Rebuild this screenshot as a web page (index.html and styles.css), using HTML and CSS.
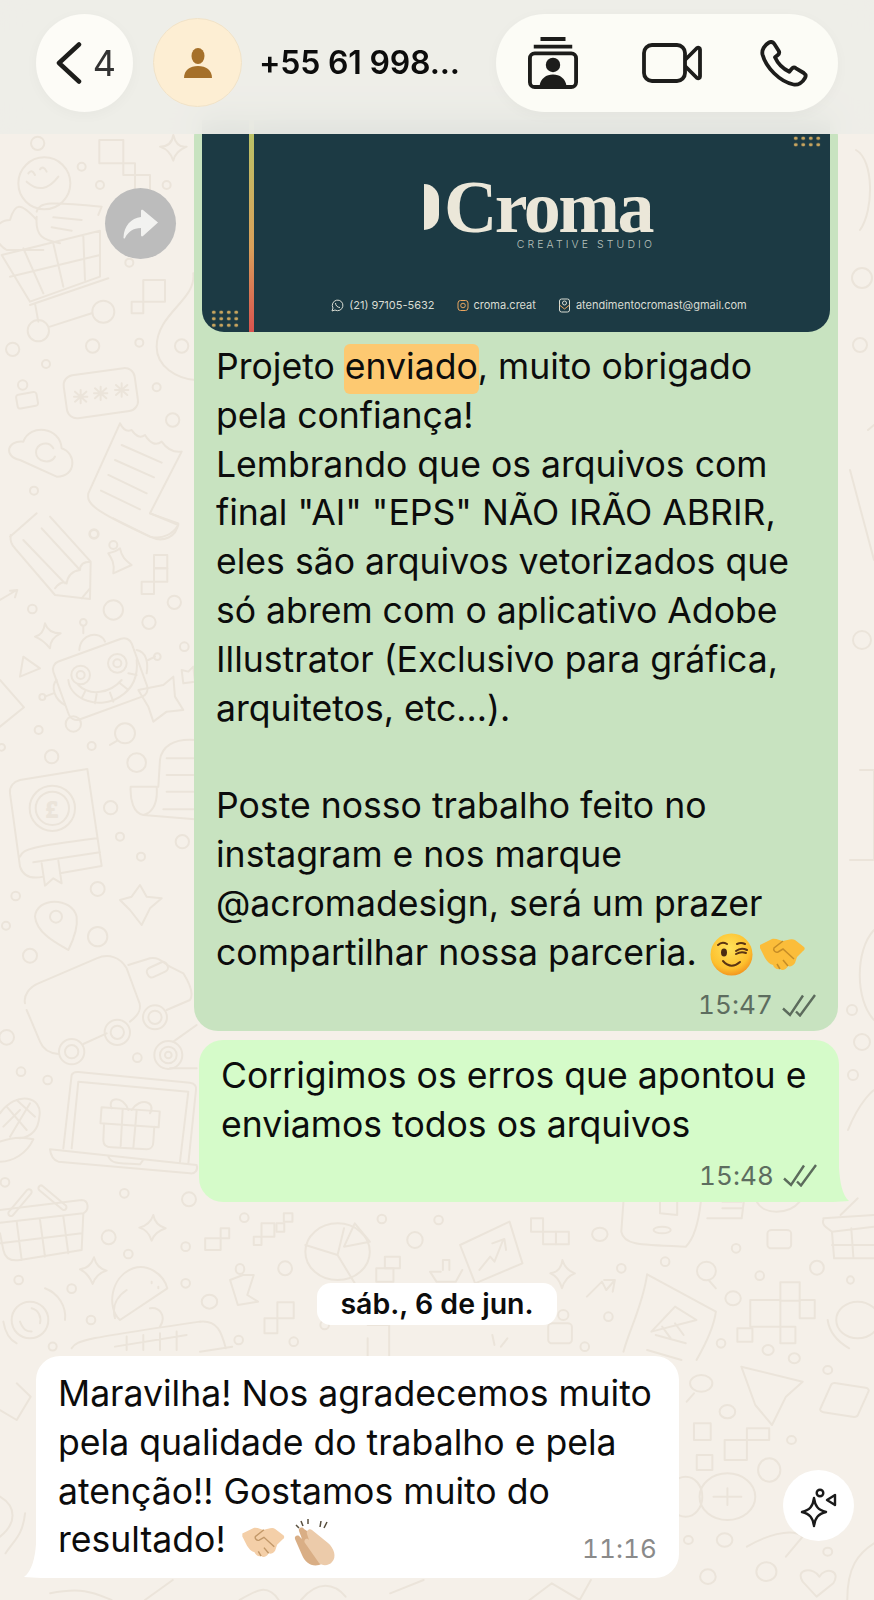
FILE: index.html
```html
<!DOCTYPE html>
<html lang="pt-BR">
<head>
    <meta charset="UTF-8">
    <title>Conversa</title>
    <link rel="stylesheet" href="styles.css">
</head>
<body>
<div class="screen">
    <!-- wallpaper doodles: coordinates are the ones read off the reference crops -->
    <svg class="doodles" width="874" height="1600" viewBox="0 0 874 1600" aria-hidden="true">
        <g transform="translate(0,140) scale(.3333)">
            <circle cx="133" cy="130" r="78"/><path d="M80 125Q130 170 175 110M85 100Q95 85 105 105M120 88Q130 75 140 95"/>
            <path d="M110 240C60 185 45 190 30 240C-20 240-30 300 20 330L130 330M110 215C120 185 150 185 305 200L295 225M110 230C105 290 130 300 180 310M160 232L245 240M155 262L215 272"/>
            <path d="M5 345L300 272L300 410L90 485ZM70 325L130 460M160 310L190 440M250 290L255 420M30 410L300 345M90 495L325 415M105 490L115 545M150 560L275 520"/>
            <circle cx="310" cy="515" r="33"/><circle cx="115" cy="572" r="32"/>
            <rect x="298" y="0" width="72" height="70"/><rect x="370" y="70" width="35" height="35"/><rect x="405" y="105" width="45" height="45"/>
            <rect x="430" y="420" width="65" height="65"/><rect x="395" y="485" width="35" height="35"/>
            <path d="M480 20Q515 20 520-15Q530 25 560 20Q525 35 520 62Q510 30 480 20ZM580 400C590 480 470 520 470 620C470 680 530 715 585 720"/>
            <rect x="50" y="760" width="62" height="42" rx="8" transform="rotate(-10 80 780)"/><circle cx="68" cy="735" r="14"/>
            <rect x="195" y="695" width="215" height="130" rx="30" transform="rotate(-8 300 760)"/>
            <path d="M242 750V790M222 770H262M225 755L259 785M259 755L225 785M302 740V780M282 760H322M285 745L319 775M319 745L285 775M365 730V770M345 750H385M348 735L382 765M382 735L348 765"/>
            <path d="M60 960C10 950 20 900 70 905C90 850 180 860 185 925C230 940 230 1010 170 1010ZM160 925C145 900 110 910 108 937C108 965 150 975 165 950"/>
            <path d="M360 850L265 1060C260 1090 275 1110 450 1190C490 1200 520 1180 535 1155L450 1120L545 935M360 850Q375 880 395 870Q415 900 435 885Q460 925 485 905Q510 940 545 935M365 915L485 968M345 960L462 1012M325 1005L440 1060M303 1052L420 1108"/>
            <circle cx="245" cy="80" r="12"/><circle cx="300" cy="135" r="12"/><circle cx="500" cy="135" r="12"/><circle cx="388" cy="368" r="12"/><circle cx="545" cy="618" r="20"/><circle cx="418" cy="608" r="12"/><circle cx="278" cy="618" r="20"/><circle cx="38" cy="628" r="20"/><circle cx="138" cy="672" r="12"/><circle cx="470" cy="742" r="12"/><circle cx="518" cy="840" r="20"/><circle cx="102" cy="1052" r="12"/><circle cx="282" cy="1182" r="12"/><circle cx="113" cy="10" r="20"/>
        </g>
        <g transform="translate(0,520) scale(.3333)">
            <path d="M32 45C30 60 35 75 45 85L165 225L270 237L272 125L150-10M30 50L110-20M70 60L195 190M125 25L240 150M165 205Q185 180 200 190Q205 155 240 150Q240 125 272 125M245 235L270 205"/>
            <path d="M340-5L450 50C490 70 530 50 535 10L450-20"/>
            <path d="M325 100C345 95 345 95 360 85C365 110 375 120 395 135L340 160C345 130 335 115 325 100Z"/><circle cx="340" cy="75" r="12"/>
            <rect x="462" y="105" width="40" height="40"/><rect x="462" y="145" width="40" height="40"/><rect x="425" y="185" width="37" height="37"/>
            <path d="M0 240L25 225L50 210M30 212L52 210L45 232M105 350Q130 345 135 310Q145 340 182 340Q150 355 150 385Q130 360 105 350ZM60 470L70 410L120 445ZM0 480L72 562L0 620"/>
            <rect x="175" y="385" width="250" height="185" rx="25" transform="rotate(-20 300 475)"/>
            <circle cx="242" cy="465" r="28"/><circle cx="242" cy="465" r="12"/><circle cx="352" cy="430" r="28"/><circle cx="352" cy="430" r="12"/>
            <path d="M205 480C210 540 300 570 360 530C400 505 415 470 410 420M235 495C270 530 330 520 365 480M255 515L245 535M290 522L285 550M330 518L340 545M360 490L385 510M385 460L410 465"/>
            <path d="M238 390C240 340 300 330 315 365M250 340V320M410 390C440 395 445 430 440 460M445 420L465 410M170 480C150 500 165 540 195 555M135 530L160 520"/>
            <path d="M415 510L490 495L520 470L525 530L550 570L500 575L460 605L445 560ZM545 450L565 455L580 440L585 485L550 490Z"/>
            <circle cx="375" cy="640" r="30"/><path d="M352 662L330 675"/>
            <path d="M392 800H470C475 860 450 880 430 885C400 880 390 840 392 800M475 800L480 720C485 680 520 655 585 660M430 885L585 898M500 715H580M500 765H580M500 815H580M490 868H580"/>
            <path d="M30 820C28 800 40 785 60 780L262 747L305 1038L180 1060M30 820L60 1040C70 1070 95 1078 130 1070M60 1010C70 985 100 980 290 955M100 1027L300 997M125 1030L135 1097L160 1075L185 1090L175 1022"/>
            <circle cx="157" cy="865" r="68"/><circle cx="157" cy="865" r="50"/><text x="137" y="890" class="pound">£</text>
            <circle cx="282" cy="42" r="14"/><circle cx="97" cy="267" r="13"/><circle cx="340" cy="270" r="29"/><circle cx="447" cy="307" r="20"/><circle cx="523" cy="247" r="20"/><circle cx="553" cy="380" r="13"/><circle cx="116" cy="630" r="12"/><circle cx="275" cy="678" r="12"/><circle cx="155" cy="710" r="20"/><circle cx="410" cy="728" r="28"/><circle cx="332" cy="863" r="20"/><circle cx="360" cy="950" r="12"/><circle cx="547" cy="965" r="20"/><circle cx="423" cy="1010" r="12"/><circle cx="293" cy="1107" r="21"/><circle cx="47" cy="1128" r="13"/><circle cx="220" cy="612" r="23"/><circle cx="250" cy="307" r="10"/><circle cx="472" cy="410" r="10"/><circle cx="127" cy="531" r="9"/><circle cx="5" cy="682" r="10"/>
        </g>
        <g transform="translate(0,900) scale(.3333)">
            <path d="M360 0L395-10L420-45L440-10L485-5L450 25L425 75L390 30ZM105 50C110-10 215-10 230 50C235 90 215 130 205 150C170 130 110 100 105 50Z"/><circle cx="168" cy="50" r="18"/>
            <path d="M75 310C70 285 90 260 115 250L290 175C325 160 360 170 380 205L415 300C430 330 410 350 390 365M80 330L120 425C130 450 150 460 175 462M250 432L320 400M385 195L450 175C480 170 490 190 510 200L550 220C575 260 580 285 570 300L500 330"/>
            <rect x="440" y="195" width="65" height="30" rx="12" transform="rotate(-25 470 210)"/>
            <circle cx="215" cy="455" r="38"/><circle cx="215" cy="455" r="20"/><circle cx="352" cy="397" r="38"/><circle cx="352" cy="397" r="20"/><circle cx="465" cy="352" r="36"/><circle cx="465" cy="352" r="20"/>
            <circle cx="505" cy="465" r="42"/><circle cx="505" cy="465" r="25"/><circle cx="505" cy="465" r="10"/><path d="M520 425L590 375M510 505H590"/>
            <path d="M190 745L215 525C218 518 225 515 235 516L570 548C585 550 590 560 588 570L565 790M215 745L235 545L565 575L540 785M150 748L590 795C595 810 585 822 570 820L175 785C160 780 152 765 150 748ZM325 770C335 790 345 790 420 793L428 782"/>
            <rect x="303" y="628" width="175" height="48" transform="rotate(4 390 650)"/>
            <path d="M312 675L310 720C310 735 320 742 335 742L440 748C455 748 460 735 460 725L463 680M368 630L362 738M410 632L400 745M335 625C320 590 370 585 385 630M395 630C420 590 470 605 450 640"/>
            <path d="M0 640C50 570 130 590 118 650C115 690 95 710 60 715M20 620L80 690M50 600L105 650M10 680L60 630M30 710L90 610M0 725C40 710 70 710 100 718C80 760 40 785 0 785"/>
            <path d="M0 930L245 900C265 900 270 930 250 940L0 968M250 940L245 1050L60 1080C30 1085 15 1075 10 1050L0 1000M50 965L65 1080M120 960L135 1070M190 950L205 1060M0 1030L245 1000"/>
            <rect x="10" y="900" width="100" height="16" rx="8" transform="rotate(-50 60 908)"/><rect x="105" y="885" width="105" height="16" rx="8" transform="rotate(40 157 893)"/>
            <path d="M418 983Q450 975 460 945Q465 975 497 985Q465 995 455 1022Q445 990 418 983ZM240 1108Q270 1105 282 1072Q290 1105 320 1112Q290 1120 278 1152Q265 1120 240 1108Z"/>
            <path d="M360 1260C320 1225 330 1130 400 1105C440 1090 490 1120 502 1165ZM345 1255C335 1220 350 1190 380 1170M455 1145V1150M475 1160V1165M450 1225C480 1220 500 1250 480 1280"/>
            <circle cx="90" cy="1260" r="55"/>
            <path d="M135 1165C175 1180 200 1220 195 1260M10 1265C15 1295 30 1320 50 1330M60 1265C70 1290 80 1295 95 1295M95 1225C115 1230 125 1250 120 1270M215 1345C230 1320 260 1315 600 1265M345 1340L560 1305M380 1310V1350M430 1305V1350M480 1300V1350M530 1295V1350"/>
            <circle cx="18" cy="77" r="12"/><circle cx="90" cy="167" r="21"/><circle cx="293" cy="110" r="29"/><circle cx="20" cy="412" r="22"/><circle cx="412" cy="473" r="13"/><circle cx="63" cy="515" r="13"/><circle cx="143" cy="540" r="13"/><circle cx="15" cy="847" r="13"/><circle cx="373" cy="880" r="13"/><circle cx="567" cy="898" r="21"/><circle cx="326" cy="1012" r="21"/><circle cx="385" cy="1062" r="13"/><circle cx="557" cy="1040" r="13"/><circle cx="56" cy="1140" r="13"/><circle cx="215" cy="1166" r="13"/><circle cx="557" cy="1150" r="13"/><circle cx="273" cy="1260" r="13"/><circle cx="158" cy="1340" r="12"/>
        </g>
        <g transform="translate(200,1195) scale(.4299,.3333)">
            <rect x="12" y="130" width="36" height="35"/><rect x="48" y="100" width="20" height="30"/><rect x="125" y="125" width="18" height="25"/><rect x="143" y="85" width="30" height="40"/><rect x="178" y="85" width="18" height="25"/><rect x="195" y="55" width="20" height="25"/>
            <ellipse cx="320" cy="170" rx="75" ry="85"/><path d="M335 100L320 180L245 150M320 180L360 265M360 85L395 140L335 155Z"/>
            <path d="M720 80L750 205L640 265L605 150ZM650 225L675 185L685 200L705 135M680 145L708 132L712 165"/>
            <rect x="770" y="70" width="28" height="40"/><rect x="798" y="110" width="30" height="38"/><rect x="828" y="110" width="30" height="38"/>
            <path d="M985 20L980 110C985 150 1020 150 1130 155C1150 130 1160 80 1165 20M1070 20V55L1110 60V20M1215 40H1260M1215 20H1260M1180 70L1260 70L1265 20M1295 20C1310 60 1370 60 1395 20"/><ellipse cx="1075" cy="105" rx="20" ry="10"/>
            <path d="M1450 70L1568 60M1470 110L1475 190L1568 190M1515 100L1520 190M1470 150H1568M1450 75C1445 90 1460 100 1470 110L1568 95M1490 60L1530 10"/>
            <rect x="1320" y="105" width="55" height="55" rx="10"/>
            <path d="M70 255L100 240L125 240L110 300L135 320L88 330Z"/><ellipse cx="93" cy="222" rx="10" ry="15"/>
            <path d="M560 230H535L550 260H595L610 225M565 225V195H580V225M815 235Q840 230 843 195Q850 225 872 235Q850 245 842 280Q835 245 815 235ZM900 305L935 260L945 285L965 255M940 255H965L960 290"/>
            <path d="M1040 238L1200 350C1195 400 1175 450 1155 495M1040 238C1030 330 1000 400 985 470M1105 335L1155 375L1050 410ZM1075 395L1095 430M1105 385L1125 420M1060 420L1130 445M1040 465L1120 495"/>
            <rect x="1350" y="262" width="45" height="55"/><rect x="1280" y="315" width="70" height="80"/><rect x="1395" y="315" width="35" height="55"/><rect x="1250" y="400" width="35" height="40"/><rect x="1350" y="395" width="35" height="50"/>
            <ellipse cx="1178" cy="228" rx="22" ry="28"/><path d="M1185 258L1200 280"/>
            <ellipse cx="1530" cy="375" rx="50" ry="55"/><path d="M1460 375C1465 420 1490 445 1510 460"/>
            <rect x="410" y="220" width="40" height="40"/><rect x="430" y="185" width="35" height="35"/><rect x="150" y="370" width="30" height="45"/><rect x="180" y="322" width="38" height="48"/>
            <rect x="810" y="385" width="55" height="60" rx="10"/><ellipse cx="845" cy="360" rx="12" ry="15"/>
            <path d="M390 390H440V490M390 430V490M0 380C40 375 50 410 60 460M0 470L75 455M680 420L685 450M715 430L700 455"/>
            <ellipse cx="103" cy="68" rx="10" ry="13"/><ellipse cx="423" cy="72" rx="10" ry="13"/><ellipse cx="555" cy="75" rx="10" ry="13"/><ellipse cx="500" cy="135" rx="18" ry="24"/><ellipse cx="198" cy="220" rx="16" ry="21"/><ellipse cx="930" cy="118" rx="18" ry="20"/><ellipse cx="1247" cy="160" rx="10" ry="13"/><ellipse cx="980" cy="220" rx="10" ry="13"/><ellipse cx="1082" cy="200" rx="10" ry="13"/><ellipse cx="1302" cy="242" rx="10" ry="13"/><ellipse cx="1435" cy="218" rx="16" ry="21"/><ellipse cx="1513" cy="255" rx="8" ry="11"/><ellipse cx="1240" cy="310" rx="18" ry="21"/><ellipse cx="22" cy="320" rx="18" ry="21"/><ellipse cx="950" cy="365" rx="10" ry="13"/><ellipse cx="1212" cy="445" rx="10" ry="13"/><ellipse cx="895" cy="455" rx="10" ry="13"/><ellipse cx="90" cy="435" rx="10" ry="13"/><ellipse cx="218" cy="440" rx="10" ry="13"/><ellipse cx="290" cy="390" rx="10" ry="13"/>
        </g>
        <g transform="translate(0,1340) scale(.5574,.3333)">
            <path d="M1330 80L1440 125L1410 170L1385 255L1355 195ZM1245 160L1232 185M1305 445V495M1280 470H1330"/>
            <ellipse cx="1258" cy="130" rx="20" ry="25"/>
            <rect x="1480" y="135" width="70" height="90" rx="8" transform="rotate(15 1515 180)"/>
            <rect x="1245" y="250" width="30" height="50"/><rect x="1300" y="300" width="40" height="60"/><rect x="1340" y="265" width="40" height="35"/><rect x="1250" y="345" width="28" height="45"/>
            <ellipse cx="1380" cy="390" rx="20" ry="35"/><ellipse cx="1305" cy="470" rx="50" ry="70"/><ellipse cx="1230" cy="470" rx="30" ry="60"/>
            <ellipse cx="1305" cy="215" rx="14" ry="20"/><ellipse cx="1378" cy="30" rx="10" ry="15"/><ellipse cx="1425" cy="55" rx="10" ry="15"/><ellipse cx="1485" cy="90" rx="8" ry="12"/><ellipse cx="1420" cy="300" rx="8" ry="12"/><ellipse cx="1235" cy="600" rx="8" ry="12"/><ellipse cx="1300" cy="600" rx="14" ry="20"/><ellipse cx="1375" cy="695" rx="18" ry="28"/><ellipse cx="1485" cy="635" rx="8" ry="12"/><ellipse cx="1270" cy="710" rx="14" ry="22"/>
            <path d="M1440 725C1425 685 1460 680 1470 710C1480 680 1510 690 1495 730L1465 770ZM1520 780C1520 680 1540 640 1568 610M1340 620C1370 590 1420 560 1440 590L1410 650M10 640C25 600 40 590 45 520M30 130L55 170L30 240L0 210M0 470C30 500 30 550 0 590M90 760C150 740 170 760 200 780M260 780L310 720M430 780C460 750 480 730 500 780M540 780C570 720 600 730 620 770M700 760L760 720M950 780L990 730L1040 780L1060 720"/>
        </g>
        <path d="M856 150C874 160 874 210 860 230M868 430L874 425M850 470L874 560M860 770H874V860H850M874 930C855 950 855 1000 874 1020M848 1130C860 1100 874 1090 874 1090"/>
        <circle cx="862" cy="278" r="10"/><circle cx="860" cy="345" r="7"/><circle cx="862" cy="640" r="9"/><circle cx="852" cy="1010" r="5"/><circle cx="862" cy="1042" r="8"/><circle cx="853" cy="1075" r="5"/>
    </svg>

    <header class="topbar">
        <button class="back-pill">
            <svg width="26" height="42" viewBox="0 0 26 42"><path d="M23 2.500L3 21L23 39.500" class="chevron"/></svg>
            <span class="back-count">4</span>
        </button>
        <div class="avatar">
            <svg width="30" height="30" viewBox="0 0 30 30"><ellipse cx="15" cy="8" rx="6.500" ry="8"/><path d="M1 30C1 22 7 18 15 18S29 22 29 30Z"/></svg>
        </div>
        <div class="contact-name">+55 61 998...</div>
        <div class="actions">
            <svg width="50" height="54" viewBox="0 0 52 54" class="solid-icon">
                <path d="M13 2H39M6 10H46" class="thin"/>
                <rect x="2" y="17" width="48" height="35" rx="5" class="thin"/>
                <circle cx="26" cy="29" r="7.500"/>
                <path d="M12 51C13 43 19 39 26 39S39 43 40 51Z"/>
            </svg>
            <svg width="60" height="40" viewBox="0 0 60 40" class="line-icon">
                <rect x="2" y="2" width="41" height="36" rx="8"/>
                <path d="M43 17L55 5C56.500 4 58 5 58 6.500V33.500C58 35 56.500 36 55 35L43 23"/>
            </svg>
            <svg width="48" height="47" viewBox="0 0 48 47" class="line-icon">
                <path d="M9 2.500C11 1.500 13 2 14.200 3.800L18.500 10.500C19.500 12 19.200 13.800 17.800 15L15 17.300C17.500 23 23.500 29 29.300 31.800L31.500 29C32.700 27.600 34.600 27.300 36 28.300L43.800 33C45.500 34.200 46 36.300 45 38C42.500 42.500 38 45.500 33.500 44.500C19.500 41.500 6 27.500 2.500 14.500C1.500 10 4.500 5 9 2.500Z"/>
            </svg>
        </div>
    </header>

    <main class="chat">
        <article class="bubble outgoing read">
            <div class="card-art">
                <span class="stripe"></span>
                <span class="dots dots-top"></span>
                <span class="dots dots-bottom"></span>
                <div class="logo">
                    <div class="logo-row"><span class="logo-moon"></span><span class="logo-word">Croma</span></div>
                    <div class="logo-sub">CREATIVE STUDIO</div>
                </div>
                <div class="card-contacts">
                    <span class="contact">
                        <svg width="13" height="13" viewBox="0 0 13 13"><path d="M1 12L2 9A5.300 5.300 0 1 1 4 11Z"/><path d="M4.500 4C4.500 6.500 6.500 8.500 9 8.500"/></svg>
                        (21) 97105-5632
                    </span>
                    <span class="contact">
                        <svg width="12" height="13" viewBox="0 0 12 13"><rect x="1" y="1.500" width="10" height="10" rx="2.500" class="ig"/><circle cx="6" cy="6.500" r="2.300" class="ig"/></svg>
                        croma.creat
                    </span>
                    <span class="contact">
                        <svg width="13" height="15" viewBox="0 0 13 15"><rect x="1.500" y="1" width="10" height="13" rx="2"/><path d="M1.500 7L6.500 11L11.500 7" class="ig"/><circle cx="6.500" cy="5" r="2"/></svg>
                        atendimentocromast@gmail.com
                    </span>
                </div>
            </div>
            <p class="msg-text">Projeto <mark class="found">enviado</mark>, muito obrigado<br>pela confiança!<br>Lembrando que os arquivos com<br>final "AI" "EPS" NÃO IRÃO ABRIR,<br>eles são arquivos vetorizados que<br>só abrem com o aplicativo Adobe<br>Illustrator (Exclusivo para gráfica,<br>arquitetos, etc...).<br><br>Poste nosso trabalho feito no<br>instagram e nos marque<br>@acromadesign, será um prazer<br>compartilhar nossa parceria.
                <svg class="emoji wink" width="43" height="43" viewBox="0 0 43 43">
                    <defs><radialGradient id="face" cx=".45" cy=".35" r=".7"><stop offset="0" stop-color="#ffe25a"/><stop offset=".7" stop-color="#fdc02e"/><stop offset="1" stop-color="#f08a1c"/></radialGradient></defs>
                    <circle cx="21.500" cy="21.500" r="21" fill="url(#face)"/>
                    <ellipse cx="14" cy="19.500" rx="3" ry="4" fill="#4a2c12"/>
                    <path d="M8 12Q12 8 17 11M26 18Q31 14 37 17M26 21Q31 18 36 20M27 11Q31 9 35 11M13 28Q21 37 30 29" fill="none" stroke="#5a3413" stroke-width="2" stroke-linecap="round"/>
                </svg>
                <svg class="emoji shake" width="46" height="33" viewBox="0 0 46 33">
                    <use href="#handshake"/>
                </svg>
            </p>
            <div class="meta">
                <span class="time">15:47</span>
                <svg class="ticks" width="34" height="23" viewBox="0 0 34 23"><path d="M1 14.500L8 21L21 1.500M14 17.500L18 21.500L33 1"/></svg>
            </div>
        </article>

        <article class="bubble outgoing fresh">
            <p class="msg-text">Corrigimos os erros que apontou e<br>enviamos todos os arquivos</p>
            <div class="meta">
                <span class="time">15:48</span>
                <svg class="ticks" width="34" height="23" viewBox="0 0 34 23"><path d="M1 14.500L8 21L21 1.500M14 17.500L18 21.500L33 1"/></svg>
            </div>
            <svg class="tail tail-right" width="34" height="34" viewBox="0 0 34 34"><path d="M24 0C25 14 27 27 34 33C25 34 12 34 0 34V0Z"/></svg>
        </article>

        <div class="date-chip">sáb., 6 de jun.</div>

        <article class="bubble incoming">
            <p class="msg-text">Maravilha! Nos agradecemos muito<br>pela qualidade do trabalho e pela<br>atenção!! Gostamos muito do</p>
            <div class="last-line">
                <p class="msg-text">resultado!
                    <svg class="emoji shake-light" width="46" height="31" viewBox="0 0 46 33"><use href="#handshake"/></svg>
                    <svg class="emoji clap" width="44" height="48" viewBox="0 0 44 48">
                        <path d="M13 12L29 30C34 36 32 44 25 46C17 48 11 43 8 36L1 20C0 17 4 15 6 18L8 20L5 12C4 9 8 7 10 10Z" fill="#d9ae85"/>
                        <path d="M18 11L34 24C40 29 43 38 38 43C35 47 28 47 25 44L11 24C9 21 13 18 15 21L13 15C12 12 15 9 18 11Z" fill="#eccbaa"/>
                        <path d="M7 2L9 7M14 0V5M2 6L5 9M27 2L26 8M33 3L30 9" stroke="#59503f" stroke-width="1.500" fill="none"/>
                    </svg>
                </p>
                <span class="time">11:16</span>
            </div>
            <svg class="tail tail-left" width="36" height="34" viewBox="0 0 36 34"><path d="M12 0C11 14 8 27 0 33C10 34 24 34 36 34V0Z"/></svg>
        </article>
    </main>

    <div class="forward-btn">
        <svg width="36" height="30" viewBox="0 0 36 30"><path d="M20 1L35 13.500L20 27C18.800 28 18 27 18 26V19C10 19 5 23 2 29C1.500 30 0.500 29.500 0.500 28.500C1 17 8 9 18 8V2C18 1 19 .300 20 1Z"/></svg>
    </div>

    <div class="ai-btn">
        <svg width="40" height="40" viewBox="0 0 40 40"><path d="M15 10C16 18 19 22 27 24C19 26 16 30 15 38C14 30 11 26 3 24C11 22 14 18 15 10Z"/><circle cx="21" cy="5" r="3.300"/><path d="M36 7V17L28 12Z"/></svg>
    </div>

    <!-- shared emoji drawing, coloured through the class on the outer svg -->
    <svg width="0" height="0" class="defs-only">
        <symbol id="handshake" viewBox="0 0 46 33">
            <path d="M1 7L13 1C17 0 21 3 24 3C28 2 33 0 36 2L45 9C46 10 46 12 44 13L38 19L36 25C34 28 31 29 29 28C27 32 23 33 21 31C18 32 15 30 14 27C10 26 8 23 6 20L1 10Z"/>
            <path d="M24 3L15 10C14 12 16 15 19 14L24 11L35 21M29 28L24 22M21 31L18 26" fill="none" stroke="rgba(120,70,10,.4)" stroke-width="1.500"/>
        </symbol>
    </svg>
</div>
</body>
</html>
```

FILE: styles.css
```css
* {
    box-sizing: border-box;
}

html, body {
    margin: 0;
    padding: 0;
}

body {
    font-family: Inter, "Noto Sans", sans-serif;
    color: #0c0c0c;
}

.screen {
    position: relative;
    width: 874px;
    height: 1600px;
    overflow: hidden;
    background: #f5f0e9;
}

.doodles {
    position: absolute;
    left: 0;
    top: 0;
    fill: none;
    stroke: #ebe4da;
    stroke-width: 2;
    stroke-linejoin: round;
    stroke-linecap: round;
}

.doodles * {
    vector-effect: non-scaling-stroke;
}

.pound {
    font-family: "Liberation Serif", serif;
    font-size: 72px;
    fill: none;
    stroke: #ebe4da;
}

/* top bar */
.topbar {
    position: absolute;
    left: 0;
    top: 0;
    z-index: 5;
    width: 100%;
    height: 134px;
    display: flex;
    align-items: flex-start;
    padding: 14px 36px 0;
    background: rgba(237, 237, 232, .94);
    backdrop-filter: blur(14px);
}

.back-pill {
    width: 97px;
    height: 98px;
    display: flex;
    align-items: center;
    justify-content: center;
    gap: 11px;
    padding: 0 0 0 3px;
    border: 0;
    border-radius: 50%;
    background: #fdfcf7;
    box-shadow: 0 3px 14px rgba(0, 0, 0, .03);
}

.chevron {
    fill: none;
    stroke: #1d1d1b;
    stroke-width: 4.500;
    stroke-linecap: round;
    stroke-linejoin: round;
}

.back-count {
    font-family: Inter, sans-serif;
    font-size: 36px;
    font-weight: 400;
    color: #333;
}

.avatar {
    width: 89px;
    height: 89px;
    margin: 4px 0 0 20px;
    display: flex;
    align-items: center;
    justify-content: center;
    border: 1px solid #f0e2c8;
    border-radius: 50%;
    background: #fdeed3;
}

.avatar svg {
    fill: #a5702a;
}

.contact-name {
    margin: 32px 0 0 17px;
    font-size: 32px;
    line-height: 34px;
    font-weight: 600;
    letter-spacing: -.2px;
    white-space: nowrap;
}

.actions {
    margin-left: auto;
    width: 342px;
    height: 98px;
    display: flex;
    align-items: center;
    justify-content: space-between;
    padding: 0 30px 0 32px;
    border-radius: 49px;
    background: #fcfcf6;
    box-shadow: 0 3px 14px rgba(0, 0, 0, .03);
}

.actions .line-icon:nth-child(2) {
    margin-left: 6px;
}

.solid-icon {
    fill: #1d1d1b;
    stroke: none;
}

.solid-icon .thin {
    fill: none;
    stroke: #1d1d1b;
    stroke-width: 4;
}

.line-icon {
    fill: none;
    stroke: #1d1d1b;
    stroke-width: 3.800;
    stroke-linejoin: round;
}

/* messages */
.chat {
    position: relative;
    display: flex;
    flex-direction: column;
    align-items: flex-start;
    padding-top: 112px;
}

.bubble {
    position: relative;
    border-radius: 24px;
}

.msg-text {
    margin: 0;
    font-size: 35.600px;
    line-height: 48.800px;
    white-space: nowrap;
}

.outgoing.read {
    width: 644px;
    margin-left: 194px;
    padding: 8px 8px 11px;
    background: #c8e3c0;
}

.read .msg-text {
    margin: 11px 0 0 14px;
}

.outgoing.fresh {
    width: 640px;
    margin: 9px 0 0 199px;
    padding: 12px 0 11px 22px;
    background: #d5fbc9;
}

.meta {
    height: 30px;
    margin-top: 13px;
    padding-right: 14px;
    display: flex;
    align-items: center;
    justify-content: flex-end;
    gap: 9px;
}

.fresh .meta {
    margin-top: 11px;
    padding-right: 22px;
}

.time {
    font-size: 26px;
    line-height: 30px;
    letter-spacing: .1px;
    font-feature-settings: "tnum";
    color: #5d6d5f;
}

.ticks {
    fill: none;
    stroke: #5c6b5c;
    stroke-width: 2.400;
}

.tail {
    position: absolute;
    bottom: 0;
}

.tail-right {
    right: -10px;
    fill: #d5fbc9;
}

.tail-left {
    left: -12px;
    fill: #fff;
}

.date-chip {
    align-self: flex-start;
    width: 240px;
    height: 42px;
    margin: 81px 0 0 317px;
    border-radius: 14px;
    background: #fff;
    text-align: center;
    font-size: 28.500px;
    line-height: 41px;
    font-weight: 600;
    white-space: nowrap;
}

.incoming {
    width: 643px;
    margin: 31px 0 0 36px;
    padding: 14px 22px 11px 22px;
    background: #fff;
}

.last-line {
    display: flex;
    justify-content: space-between;
    align-items: flex-end;
}

.incoming .time {
    color: #8a8a8a;
    line-height: 36px;
}

/* search highlight on the found word */
.found {
    padding: 1px 1px 6px;
    margin: 0 -1px;
    border-radius: 6px;
    background: #fdc971;
    color: inherit;
}

/* emoji drawings */
.emoji {
    vertical-align: middle;
}

.wink {
    margin-left: 3px;
}

.shake {
    fill: #fbbd3a;
    margin-left: -4px;
}

.shake-light {
    fill: #f4cfa8;
    margin-left: 4px;
}

.clap {
    margin-left: -2px;
}

.defs-only {
    position: absolute;
}

/* image inside the first message */
.card-art {
    position: relative;
    height: 212px;
    padding-top: 58px;
    display: flex;
    flex-direction: column;
    align-items: center;
    border-radius: 0 0 22px 22px;
    background: #1c3a44;
    overflow: hidden;
}

.stripe {
    position: absolute;
    left: 47px;
    top: 0;
    bottom: 0;
    width: 5px;
    background: linear-gradient(#b7c668, #d9a05a 60%, #d9534f);
}

.dots {
    position: absolute;
    width: 30px;
    background-image: radial-gradient(circle, #c9a55e 1.500px, transparent 2px);
    background-size: 7.500px 6.500px;
}

.dots-top {
    right: 8px;
    top: 15px;
    height: 13px;
}

.dots-bottom {
    left: 8px;
    top: 189px;
    height: 19px;
}

.logo {
    margin-left: 44px;
    width: 228px;
}

.logo-row {
    display: flex;
    align-items: center;
    height: 58px;
}

.logo-moon {
    width: 16px;
    height: 46px;
    margin-right: 5px;
    border-radius: 0 23px 23px 0 / 0 23px 23px 0;
    background: #ebe7d9;
}

.logo-word {
    font-family: "Liberation Serif", serif;
    font-size: 74px;
    line-height: 58px;
    font-weight: 700;
    letter-spacing: -2.500px;
    color: #ebe7d9;
}

.logo-sub {
    margin-top: 2px;
    text-align: right;
    font-size: 10.500px;
    line-height: 13px;
    font-weight: 300;
    letter-spacing: 3.100px;
    margin-right: -3px;
    color: #b8c2bd;
}

.card-contacts {
    display: flex;
    align-items: center;
    gap: 22px;
    margin: 46px 0 0 46px;
    font-size: 11px;
    line-height: 16px;
    color: #d9dcd3;
    white-space: nowrap;
}

.contact {
    display: flex;
    align-items: center;
    gap: 5px;
}

.contact svg {
    fill: none;
    stroke: #d9dcd3;
}

.contact .ig {
    stroke: #e9a55f;
}

/* round floating buttons */
.forward-btn {
    position: absolute;
    left: 105px;
    top: 188px;
    width: 71px;
    height: 71px;
    display: flex;
    align-items: center;
    justify-content: center;
    border-radius: 50%;
    background: #bcbcbc;
}

.forward-btn svg {
    fill: #f2f2f0;
}

.ai-btn {
    position: absolute;
    left: 783px;
    top: 1470px;
    width: 71px;
    height: 71px;
    padding-top: 4px;
    display: flex;
    align-items: center;
    justify-content: center;
    border-radius: 50%;
    background: #fff;
}

.ai-btn svg {
    fill: none;
    stroke: #1a1a1a;
    stroke-width: 2.400;
    stroke-linejoin: round;
}
```
